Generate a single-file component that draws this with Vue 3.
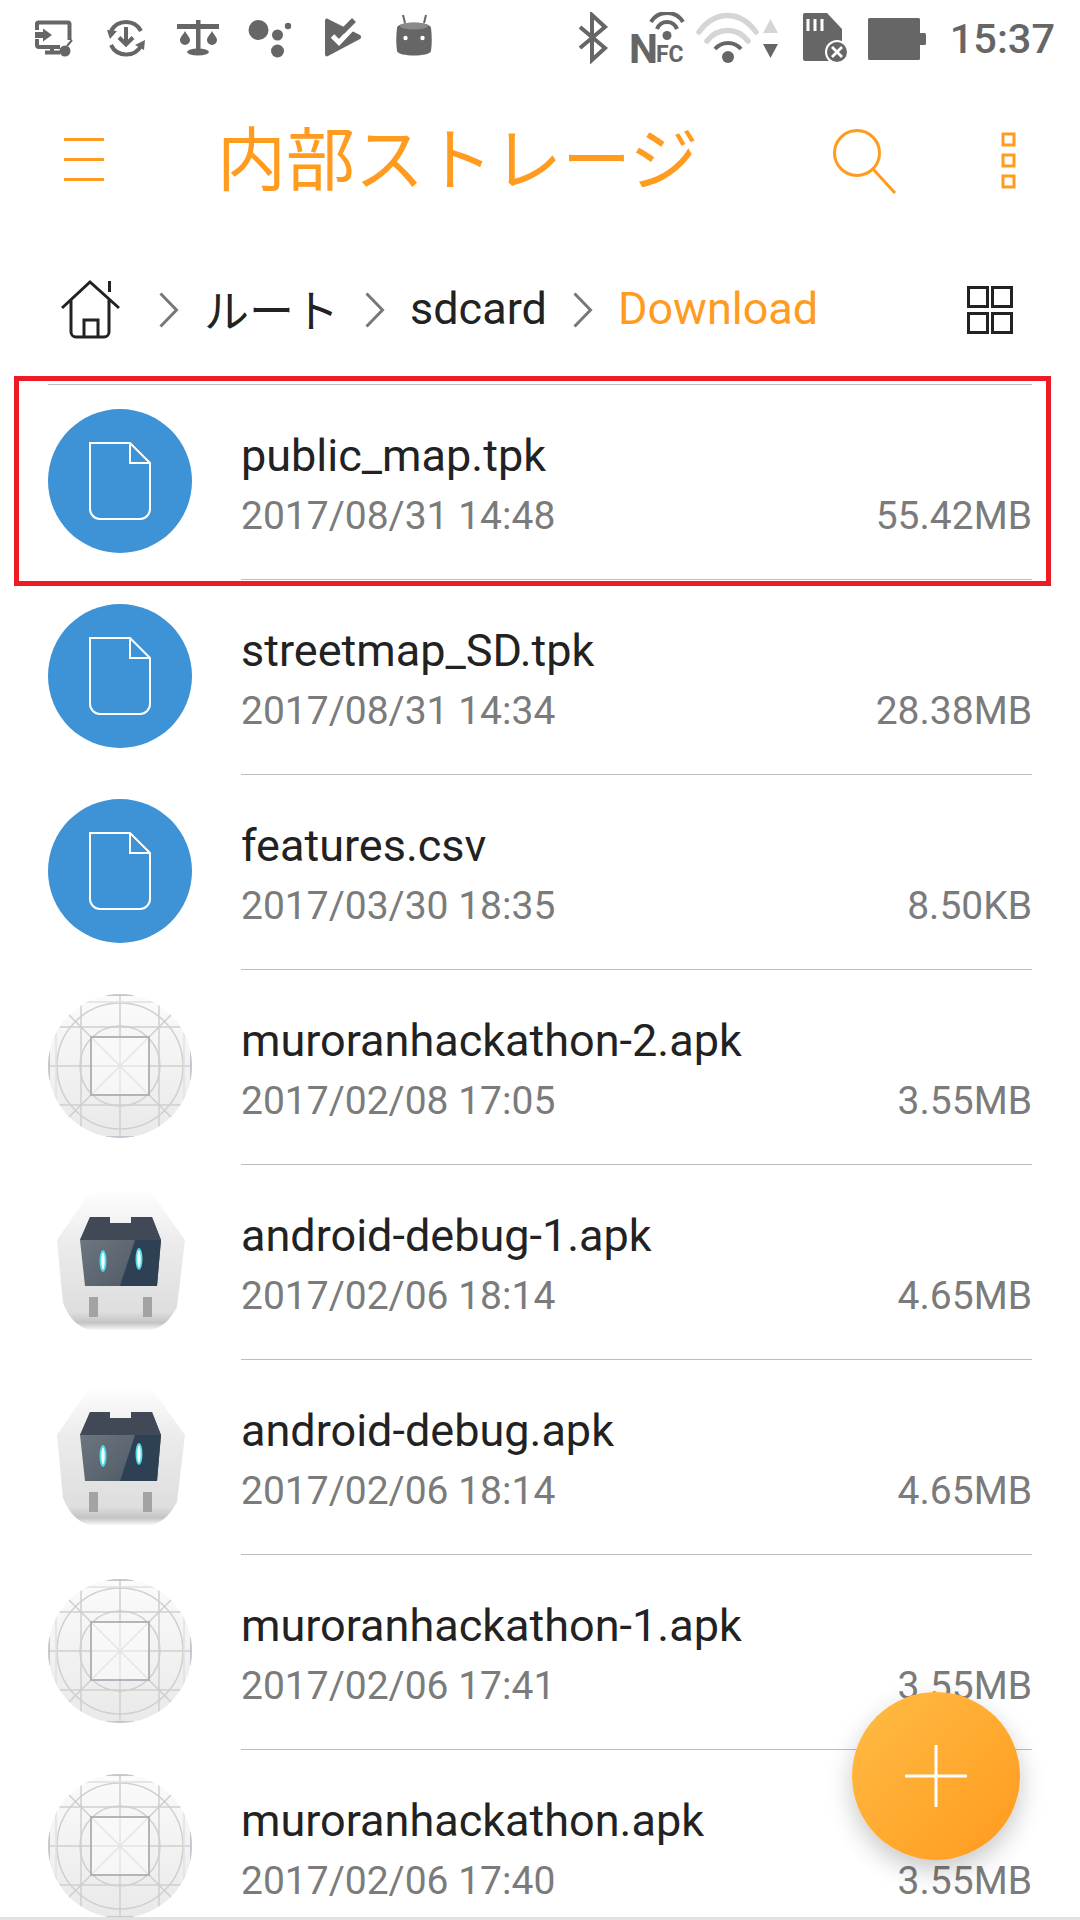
<template>
  <div class="page">
    <div class="statusbar">
      <div class="status-left">
        <!-- monitor + mouse -->
        <svg class="cell" viewBox="18 12 72 52">
          <path d="M37 30V24a1.500 1.500 0 0 1 1.500-1.500H68a1.500 1.500 0 0 1 1.500 1.500V40M37 39v6a2 2 0 0 0 2 2H60" class="st" />
          <path d="M35 32h8v-3.500l9 6.500-9 6.500V38h-8z" class="fi" />
          <path d="M52 47v5M45 52.500h15" class="st" />
          <circle cx="65" cy="51" r="5.500" class="fi" />
          <path d="M67 46l5-6" class="st thin" />
        </svg>
        <!-- download with sync arrows -->
        <svg class="cell" viewBox="90 12 72 52">
          <path d="M111 31A17 17 0 0 1 141 31M141 46A17 17 0 0 1 111 45" class="st" />
          <path d="M107 30l10 1-7 8zM145 40l-1 10-9-5z" class="fi" />
          <path d="M126 27v17M119 37.500l7 7 7-7" class="st" />
        </svg>
        <!-- scales -->
        <svg class="cell" viewBox="162 12 72 52">
          <rect x="177" y="24" width="42" height="5" class="fi" />
          <rect x="196" y="20" width="4.500" height="31" class="fi" />
          <ellipse cx="198" cy="52" rx="11" ry="3.500" class="fi" />
          <path d="M185 31c-2 4-5 6-5 9a5 5 0 0 0 10 0c0-3-3-5-5-9zM212 31c-2 4-5 6-5 9a5 5 0 0 0 10 0c0-3-3-5-5-9z" class="fi" />
        </svg>
        <!-- assistant dots -->
        <svg class="cell" viewBox="234 12 72 52">
          <circle cx="258.500" cy="30" r="10" class="fi" />
          <circle cx="277.500" cy="35" r="5.500" class="fi" />
          <circle cx="288" cy="26" r="3.200" class="fi" />
          <circle cx="277.500" cy="51" r="6.500" class="fi" />
        </svg>
        <!-- play + check -->
        <svg class="cell" viewBox="306 12 72 52">
          <path d="M325 21c0-2 1.500-3 3-2l32 16c1.500 1 1.500 3 0 4l-32 17c-1.500 1-3 0-3-2z" class="fi" />
          <path d="M332.500 36l6.500 6.500 14-15" fill="none" stroke="#fff" stroke-width="5" />
          <path d="M342 32l12-12" fill="none" stroke="#666" stroke-width="5.500" />
        </svg>
        <!-- drum robot -->
        <svg class="cell" viewBox="378 12 72 52">
          <path d="M403 15l2 8M426 15l-2 8" class="st thin" />
          <path d="M397 28c0-7 34-7 34 0 1 8 1 16 0 23-1 6-33 6-34 0-1-7-1-15 0-23z" class="fi" />
          <ellipse cx="414" cy="26" rx="14" ry="3.500" fill="#8a8a8a" />
          <circle cx="405.500" cy="38" r="2.200" fill="#fff" />
          <circle cx="422.500" cy="38" r="2.200" fill="#fff" />
        </svg>
      </div>

      <div class="status-right">
        <!-- bluetooth -->
        <svg class="s-bt" viewBox="577 12 40 52">
          <path d="M579 27l25 21-13 12V15l13 12-25 21" class="st" stroke-width="4.500" />
        </svg>
        <!-- nfc -->
        <svg class="s-nfc" viewBox="617 12 73 64">
          <circle cx="666" cy="35.500" r="4.500" class="fi" />
          <path d="M656 29a10.600 10.600 0 0 1 20 0M650 22a18.700 18.700 0 0 1 32 0" class="st" />
          <text x="628" y="63" class="nfc-big">N</text>
          <text x="655" y="62" class="nfc-small">FC</text>
        </svg>
        <!-- wifi -->
        <svg class="s-wifi" viewBox="690 12 100 52">
          <path d="M698 32c16-22 41-22 57 0M706 41c11-14 30-14 41 0" fill="none" stroke="#d5d5d5" stroke-width="5.500" stroke-linecap="round" />
          <path d="M714 49c7-8 19-8 26 0" class="st" stroke-width="5" />
          <circle cx="727" cy="57" r="6" class="fi" />
          <path d="M769.500 19l7.500 14h-15z" fill="#d5d5d5" />
          <path d="M769.500 58l-7.500-14h15z" class="fi" />
        </svg>
        <!-- sd card error -->
        <svg class="s-sd" viewBox="790 12 68 52">
          <path d="M802 15a2 2 0 0 1 2-2h22l15 16v32h-37a2 2 0 0 1-2-2z" class="fi" />
          <path d="M807 19v12M814 19v12M821 19v12" stroke="#fff" stroke-width="3" />
          <circle cx="836" cy="52" r="12" fill="#fff" />
          <circle cx="836" cy="52" r="10" class="fi" />
          <path d="M831 47l10 10M841 47l-10 10" stroke="#fff" stroke-width="2.800" />
        </svg>
        <!-- battery -->
        <svg class="s-bat" viewBox="858 12 80 52">
          <rect x="867" y="18" width="52" height="42" rx="1.500" class="fi" />
          <rect x="918" y="33" width="7" height="12" rx="1.500" class="fi" />
        </svg>
        <span class="clock">15:37</span>
      </div>
    </div>

    <div class="toolbar">
      <svg class="tb-menu" viewBox="0 0 40 46">
        <path d="M0 1.500h40M0 21.500h40M0 41.500h40" class="or" />
      </svg>
      <div class="title">内部ストレージ</div>
      <svg class="tb-search" viewBox="0 0 66 66">
        <circle cx="26" cy="25" r="22.500" class="or" />
        <path d="M42 41l22 24" class="or" />
      </svg>
      <svg class="tb-more" viewBox="0 0 15 58">
        <rect x="2" y="2" width="11" height="11" class="or" />
        <rect x="2" y="23" width="11" height="11" class="or" />
        <rect x="2" y="44" width="11" height="11" class="or" />
      </svg>
    </div>

    <div class="crumbs">
      <svg class="home" viewBox="60 284 62 62">
        <path d="M62 313l28-26 29 26M71 305v32a5 5 0 0 0 5 5h28a5 5 0 0 0 5-5v-32M109.500 286v11" class="dk" />
        <path d="M84 342v-17h14v17" class="dk" />
      </svg>
      <svg class="chev" viewBox="0 0 20 36"><path d="M1.500 1.500l16 16.500-16 16.500" /></svg>
      <span class="crumb">ルート</span>
      <svg class="chev" viewBox="0 0 20 36"><path d="M1.500 1.500l16 16.500-16 16.500" /></svg>
      <span class="crumb">sdcard</span>
      <svg class="chev" viewBox="0 0 20 36"><path d="M1.500 1.500l16 16.500-16 16.500" /></svg>
      <span class="crumb crumb-on">Download</span>
      <svg class="gridview" viewBox="0 0 46 48">
        <rect x="1.500" y="1.500" width="19" height="19" class="dk" />
        <rect x="25.500" y="1.500" width="19" height="19" class="dk" />
        <rect x="1.500" y="27.500" width="19" height="19" class="dk" />
        <rect x="25.500" y="27.500" width="19" height="19" class="dk" />
      </svg>
    </div>

    <div class="list">
      <div v-for="f in files" :key="f.name" class="row">
        <svg v-if="f.type === 'file'" class="thumb" viewBox="0 0 144 144">
          <circle cx="72" cy="72" r="72" fill="#3e92d6" />
          <path d="M42 34H82L102 54V100a10 10 0 0 1-10 10H52a10 10 0 0 1-10-10Z" fill="none" stroke="#fff" stroke-width="2" />
          <path d="M82 34V54H102" fill="none" stroke="#fff" stroke-width="2" />
        </svg>

        <svg v-else-if="f.type === 'apk'" class="thumb" viewBox="0 0 144 144">
          <defs>
            <linearGradient id="apkbg" x1="0" y1="0" x2="0" y2="1">
              <stop offset="0" stop-color="#fbfbfb" />
              <stop offset="1" stop-color="#e9e9e9" />
            </linearGradient>
            <clipPath id="apkclip"><circle cx="72" cy="72" r="72" /></clipPath>
          </defs>
          <circle cx="72" cy="72" r="72" fill="url(#apkbg)" />
          <g clip-path="url(#apkclip)" fill="none" stroke="#cfcfcf" stroke-width="1.500">
            <circle cx="72" cy="72" r="40" />
            <circle cx="72" cy="72" r="63" />
            <path d="M72 0V144M0 72H144M33 8V136M111 8V136M8 33H136M8 111H136M9 9L135 135M135 9L9 135" />
            <path d="M8 20V124M136 20V124M20 8H124" stroke="#e0e0e0" />
            <rect x="43" y="43" width="58" height="58" fill="rgba(255,255,255,.45)" stroke="#a9afb6" stroke-width="1.800" />
            <path d="M58 1H86M58 143H86M1 58V86M143 58V86" stroke="#c2c8ce" stroke-width="2" />
          </g>
        </svg>

        <svg v-else class="thumb" viewBox="0 0 144 144">
          <defs>
            <linearGradient id="cdvtop" x1="0" y1="0" x2="0" y2="1">
              <stop offset="0" stop-color="#fdfdfd" />
              <stop offset="1" stop-color="#ececec" />
            </linearGradient>
            <linearGradient id="cdvbody" x1="0" y1="0" x2="0" y2="1">
              <stop offset="0" stop-color="#ececec" />
              <stop offset=".8" stop-color="#dedede" />
              <stop offset=".92" stop-color="#c4c4c4" />
              <stop offset="1" stop-color="#f7f7f7" />
            </linearGradient>
            <linearGradient id="cdvhead" x1="0" y1="0" x2="1" y2="1">
              <stop offset="0" stop-color="#737c85" />
              <stop offset="1" stop-color="#4a5560" />
            </linearGradient>
            <filter id="soft"><feGaussianBlur stdDeviation=".7" /></filter>
          </defs>
          <g filter="url(#soft)">
            <path d="M47 4H99Q104 4 107 9L137 51H9L38 9Q41 4 47 4Z" fill="url(#cdvtop)" />
            <path d="M9 51H137L129 118Q118 139 102 141H42Q24 137 15 114Z" fill="url(#cdvbody)" />
            <path d="M42 28H62V34H83V28H104L113 51L109 97H37L32 51Z" fill="url(#cdvhead)" />
            <path d="M87 51H113L109 97H72Z" fill="#2f4152" />
            <path d="M42 28H62V34H83V28H104L113 51H32Z" fill="#3f4a55" />
            <rect x="41" y="108" width="9" height="20" fill="#a3a3a3" />
            <rect x="95" y="108" width="9" height="20" fill="#a3a3a3" />
            <ellipse cx="55" cy="72" rx="3.500" ry="11" fill="#4fdcec" />
            <ellipse cx="91" cy="70" rx="3.500" ry="11" fill="#4fdcec" />
            <ellipse cx="55" cy="72" rx="1.700" ry="8.500" fill="#f0feff" />
            <ellipse cx="91" cy="70" rx="1.700" ry="8.500" fill="#f0feff" />
          </g>
        </svg>

        <div class="info">
          <div class="name">{{ f.name }}</div>
          <div class="meta">
            <span>{{ f.date }}</span>
            <span>{{ f.size }}</span>
          </div>
        </div>
      </div>
    </div>

    <div class="bottom-line"></div>

    <div class="highlight"></div>

    <div class="fab">
      <svg viewBox="0 0 62 62" class="fab-plus">
        <path d="M31 0V62M0 31H62" stroke="#fff" stroke-width="3" />
      </svg>
    </div>
  </div>
</template>

<script setup>
const files = [
  { type: 'file', name: 'public_map.tpk', date: '2017/08/31 14:48', size: '55.42MB' },
  { type: 'file', name: 'streetmap_SD.tpk', date: '2017/08/31 14:34', size: '28.38MB' },
  { type: 'file', name: 'features.csv', date: '2017/03/30 18:35', size: '8.50KB' },
  { type: 'apk', name: 'muroranhackathon-2.apk', date: '2017/02/08 17:05', size: '3.55MB' },
  { type: 'cordova', name: 'android-debug-1.apk', date: '2017/02/06 18:14', size: '4.65MB' },
  { type: 'cordova', name: 'android-debug.apk', date: '2017/02/06 18:14', size: '4.65MB' },
  { type: 'apk', name: 'muroranhackathon-1.apk', date: '2017/02/06 17:41', size: '3.55MB' },
  { type: 'apk', name: 'muroranhackathon.apk', date: '2017/02/06 17:40', size: '3.55MB' }
]
</script>

<style scoped>
.page {
  position: relative;
  width: 1080px;
  height: 1920px;
  overflow: hidden;
  display: flex;
  flex-direction: column;
  background: #fff;
  font-family: Roboto, "Noto Sans CJK JP", sans-serif;
}

/* status bar */
.statusbar {
  flex: none;
  height: 76px;
  padding-top: 12px;
  box-sizing: border-box;
  display: flex;
  align-items: flex-start;
}

.status-left {
  display: flex;
  padding-left: 18px;
}

.status-right {
  margin-left: auto;
  display: flex;
  padding-right: 25px;
}

.statusbar svg {
  height: 52px;
  flex: none;
  display: block;
}

.cell { width: 72px; }
.s-bt { width: 40px; }
.statusbar .s-nfc { width: 73px; height: 64px; }
.s-wifi { width: 100px; }
.s-sd { width: 68px; }
.s-bat { width: 80px; }

.fi { fill: #666; }

.st {
  fill: none;
  stroke: #666;
  stroke-width: 4;
}

.thin { stroke-width: 2; }

.nfc-big {
  font-family: Roboto, sans-serif;
  font-size: 41px;
  font-weight: 700;
  fill: #666;
}

.nfc-small {
  font-family: Roboto, sans-serif;
  font-size: 23px;
  font-weight: 700;
  fill: #666;
}

.clock {
  margin-left: 11px;
  margin-top: 1px;
  font-size: 41.500px;
  font-weight: 500;
  line-height: 52px;
  color: #666;
}

/* toolbar */
.toolbar {
  flex: none;
  height: 170px;
  padding: 0 64px;
  box-sizing: border-box;
  display: flex;
  align-items: center;
}

.or {
  fill: none;
  stroke: #ff9c1f;
  stroke-width: 3;
}

.tb-menu {
  width: 40px;
  height: 46px;
  flex: none;
}

.title {
  margin-left: 113px;
  margin-bottom: 12px;
  font-family: "Noto Sans CJK JP", sans-serif;
  font-size: 69px;
  line-height: 90px;
  color: #ff9c1f;
  white-space: nowrap;
}

.tb-search {
  width: 66px;
  height: 66px;
  flex: none;
  margin-left: auto;
}

.tb-more {
  width: 15px;
  height: 58px;
  flex: none;
  margin-left: 104px;
}

/* breadcrumb */
.crumbs {
  flex: none;
  height: 128px;
  padding-left: 60px;
  box-sizing: border-box;
  display: flex;
  align-items: center;
}

.home {
  width: 62px;
  height: 62px;
  flex: none;
  margin-right: 11px;
}

.dk {
  fill: none;
  stroke: #222;
  stroke-width: 3;
}

.chev {
  width: 20px;
  height: 36px;
  flex: none;
  margin-left: 26px;
}

.chev path {
  fill: none;
  stroke: #777;
  stroke-width: 3;
}

.crumb {
  margin-left: 25px;
  margin-bottom: 4px;
  font-size: 45px;
  color: #222;
  white-space: nowrap;
}

.crumb-on { color: #ff9c1f; }

.gridview {
  width: 46px;
  height: 48px;
  flex: none;
  margin-left: auto;
  margin-right: 67px;
}

/* file list */
.list {
  flex: 1;
  min-height: 0;
  margin-top: 10px;
  overflow: hidden;
  position: relative;
}

.list::before {
  content: '';
  display: block;
  height: 1px;
  margin: 0 48px;
  background: #bdbdbd;
}

.row {
  height: 195px;
  display: flex;
  align-items: flex-start;
  padding: 0 48px;
}

.thumb {
  width: 144px;
  height: 144px;
  flex: none;
  margin-top: 24px;
}

.info {
  flex: 1;
  min-width: 0;
  margin-left: 49px;
  height: 195px;
  box-sizing: border-box;
  padding-top: 38px;
  border-bottom: 1px solid #bdbdbd;
}

.name {
  font-size: 45px;
  line-height: 66px;
  color: #222;
}

.meta {
  display: flex;
  justify-content: space-between;
  font-size: 39px;
  line-height: 54px;
  color: #7b7b7b;
}

.bottom-line {
  flex: none;
  height: 3px;
  background: #e2e2e2;
}

/* annotation frame */
.highlight {
  position: absolute;
  left: 14px;
  top: 376px;
  width: 1037px;
  height: 210px;
  box-sizing: border-box;
  border: 5px solid #ed1c24;
}

.fab {
  position: absolute;
  left: 852px;
  top: 1692px;
  width: 168px;
  height: 168px;
  border-radius: 50%;
  background: linear-gradient(135deg, #ffbc45, #ff9a1e);
  box-shadow: 0 10px 26px rgba(0, 0, 0, 0.22);
  display: flex;
  align-items: center;
  justify-content: center;
}

.fab-plus {
  width: 62px;
  height: 62px;
}
</style>
